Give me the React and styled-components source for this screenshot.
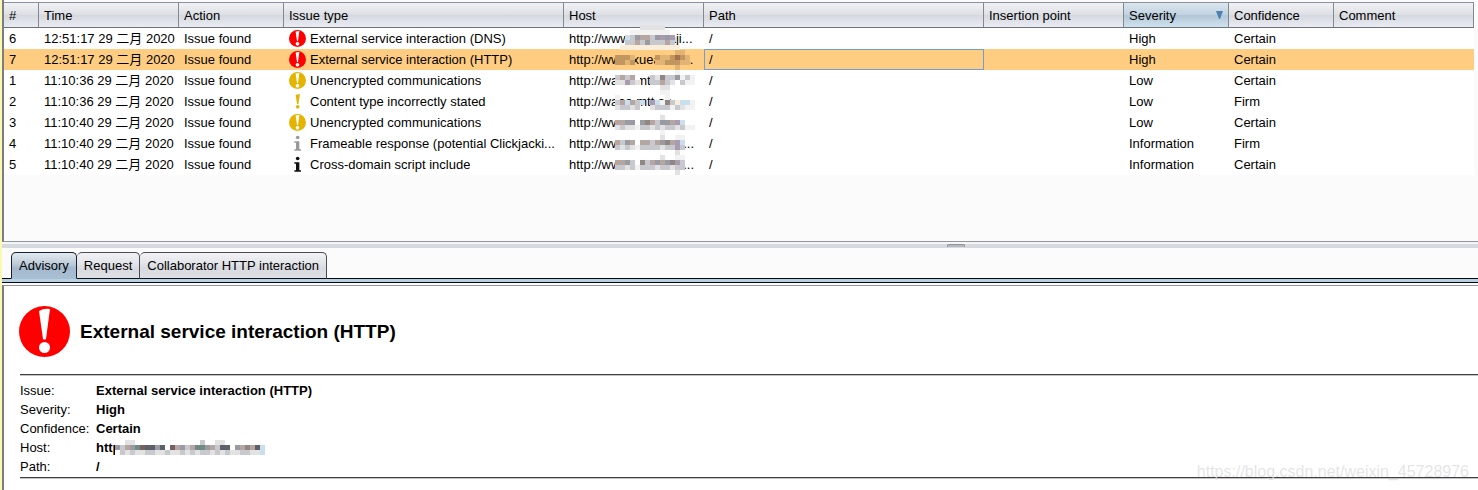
import React, { useState } from "react";
import styled, { createGlobalStyle } from "styled-components";

const GlobalStyle = createGlobalStyle`
  * { box-sizing: border-box; }
  body {
    margin: 0;
    background: #fbfbfb;
    color: #000;
    font: 13px/19px "Liberation Sans", "Noto Sans CJK SC", sans-serif;
  }
`;

const Window = styled.div`
  position: relative;
  display: flex;
  flex-direction: column;
  min-height: 100vh;
  overflow: hidden;
  border-left: 2px solid #fbf8b2;
`;

const ListPane = styled.section`
  flex: none;
  min-height: 242px;
  padding: 2px 4px 0 0;
  border-left: 2px solid #7b7e85;
  border-bottom: 1px solid #92959b;
`;

const IssueTable = styled.table`
  width: 100%;
  table-layout: fixed;
  border-collapse: separate;
  border-spacing: 0;
  background: #fff;
`;

const Col = styled.col`
  width: ${(p) => (p.$width ? `${p.$width}px` : "auto")};
`;

const HeadCell = styled.th`
  height: 26px;
  padding: 0 5px;
  text-align: left;
  font-weight: normal;
  border-top: 1px solid #8b919c;
  border-right: 1px solid #84888f;
  border-bottom: 1px solid #6d7279;
  background: ${(p) =>
    p.$sorted
      ? "linear-gradient(#dbe6ee, #c0d2e0 50%, #b1c6d6 51%, #cfe2ef)"
      : "linear-gradient(#f1f2f5, #dcdfe4 50%, #d5d8de 51%, #e9ecf2)"};
`;

const HeadContent = styled.div`
  display: flex;
  justify-content: space-between;
  align-items: center;
`;

const SortArrow = styled.svg`
  width: 7px;
  height: 8px;
`;

const IssueRow = styled.tr`
  background: ${(p) => (p.$selected ? "#ffcd82" : "#fff")};
`;

const Cell = styled.td`
  height: 21px;
  padding: 0 0 0 5px;
  line-height: 19px;
  white-space: nowrap;
  overflow: hidden;
  text-overflow: ellipsis;
  outline: ${(p) => (p.$focused ? "1px solid #6f9fce" : "none")};
  outline-offset: -1px;
`;

const HostCell = styled(Cell)`
  position: ${(p) => (p.$anchor ? "relative" : "static")};
  overflow: visible;
`;

const IssueName = styled.div`
  display: flex;
  align-items: center;
  gap: 4px;
  span {
    overflow: hidden;
    text-overflow: ellipsis;
  }
`;

const IconBox = styled.svg`
  flex: none;
  width: ${(p) => p.$size}px;
  height: ${(p) => p.$size}px;
`;

const Mosaic = styled.svg`
  position: absolute;
  z-index: 1;
  top: ${(p) => p.$top}px;
  left: ${(p) => p.$left}px;
  pointer-events: none;
`;

const Splitter = styled.div`
  flex: none;
  height: 8px;
  padding-left: 64%;
  border-top: 2px solid #f4f5f7;
  border-bottom: 2px solid #fbfbfb;
  background: #d6d9df;
`;

const Grip = styled.div`
  width: 18px;
  height: 3px;
  border: 1px solid #8f949c;
  border-bottom: 0;
  border-radius: 2px 2px 0 0;
  background: #b4b8bf;
`;

const TabBar = styled.div`
  display: flex;
  padding: 2px 0 0 9px;
  border-bottom: 1px solid #05080f;
`;

const Tab = styled.button`
  height: 27px;
  margin: 0 0 -1px;
  padding: 0 7px 1px;
  font: inherit;
  color: #000;
  border: 1px solid ${(p) => (p.$active ? "#16202e" : "#4a4d54")};
  border-left-width: ${(p) => (p.$first ? "1px" : "0")};
  border-bottom-color: ${(p) => (p.$active ? "#a9bfd3" : "#0c1018")};
  border-radius: 5px 5px 0 0;
  background: ${(p) =>
    p.$active
      ? "linear-gradient(#e3eaf0, #bccbd9 45%, #a3b8cc 60%, #a9bfd3)"
      : "linear-gradient(#f3f3f6, #e1e3e8 45%, #d8dae0 60%, #dee0e5)"};
`;

const TabStrip = styled.div`
  height: 4px;
  background: #b9d0e1;
  border-bottom: 1px solid #05080f;
`;

const Advisory = styled.section`
  flex: 1;
  margin-top: 2px;
  padding: 20px 0 0 16px;
  border-top: 1px solid #92959b;
  border-left: 2px solid #7b7e85;
  background: #fff;
`;

const TitleRow = styled.header`
  display: flex;
  align-items: center;
  gap: 10px;
  margin-left: -1px;
`;

const Title = styled.h1`
  margin: 0;
  font-size: 19px;
  line-height: 24px;
  font-weight: bold;
`;

const Rule = styled.hr`
  height: 2px;
  margin: ${(p) => p.$top}px 0 0;
  border: 0;
  border-top: 1px solid #404040;
  background: #c6c3c6;
`;

const Facts = styled.table`
  margin-top: 5px;
  border-spacing: 0;
  th, td {
    height: 19px;
    padding: 0;
    text-align: left;
    white-space: nowrap;
  }
  th {
    width: 76px;
    font-weight: normal;
  }
  td {
    position: relative;
    font-weight: bold;
  }
`;

const Watermark = styled.div`
  position: absolute;
  right: 9px;
  bottom: 8px;
  font-size: 16px;
  line-height: 20px;
  color: rgba(220, 220, 220, 0.75);
`;

const COLORS = { red: "#ff0000", yellow: "#e5b400", grey: "#999999", black: "#111111" };

function IssueIcon({ kind, color, size = 17 }) {
  const fill = COLORS[color];
  return (
    <IconBox $size={size} viewBox="0 0 51 51" aria-hidden="true">
      {kind === "disc" && (
        <>
          <circle cx="25.500" cy="25.500" r="25.500" fill={fill} />
          <path d="M20 5 Q25 2 31 3 L27 33 Q25 34 24 33 Z" fill="#fff" />
          <circle cx="25.500" cy="41.500" r="5.500" fill="#fff" />
        </>
      )}
      {kind === "bang" && (
        <>
          <path d="M20 6 Q26 3 33 4 L28 33 H24 Z" fill={fill} />
          <circle cx="26" cy="41.500" r="5.500" fill={fill} />
        </>
      )}
      {kind === "info" && (
        <>
          <circle cx="26" cy="7.500" r="5.500" fill={fill} />
          <path d="M16 19 H31 V43 H36 V47 H16 V43 H21 V23 H16 Z" fill={fill} />
        </>
      )}
    </IconBox>
  );
}

const SHADES = {
  a: "#9a9ba2", b: "#b5a6a1", c: "#c7c9cf", d: "#e2e2e2", e: "#a99bb0", f: "#8e8783",
  g: "#c9dfee", h: "#faedda", o: "#c2975f", p: "#e3b374", q: "#a8704c", s: "#f2f2f2", w: "#ffffff",
  k: "#5d6069", t: "#6f8a83", m: "#78605e",
};

function Blocks({ rows, top, left }) {
  return (
    <Mosaic $top={top} $left={left} width={rows[0].length * 5} height={rows.length * 5} shapeRendering="crispEdges" aria-hidden="true">
      {rows.flatMap((row, y) =>
        [...row].map((ch, x) =>
          SHADES[ch] ? <rect key={`${x}-${y}`} x={x * 5} y={y * 5} width="5" height="5" fill={SHADES[ch]} /> : null
        )
      )}
    </Mosaic>
  );
}

const HOST_BLOCKS = [
  "......ddddd......",
  "....ssssssss.....",
  "...gcabbcaeae....",
  "...ccbcacccbc....",
  "..hhhhhhhhhhhh...",
  ".............pp..",
  ".ooop....oppoqop.",
  ".oopo....ppooopp.",
  ".............p...",
  ".............s...",
  ".cbcbw..cdfccascs",
  ".ddecd..ccbcdwcss",
  "..........dd.....",
  "..........ss.....",
  ".s.........s.....",
  ".cbgbcg.egsfchggs",
  ".dccdc..dcccscdss",
  ".................",
  "..........d......",
  ".bbaawafbcaabegww",
  ".dcddsccdcdccdcss",
  "..........s......",
  "..........d..ss..",
  ".bcabwbbcbafbeg..",
  ".cdcdsccccdccec..",
  ".............d...",
  "..........d..ss..",
  ".bbacwfcbabafec..",
  ".ccdcscccdccdcc..",
  ".............d...",
];

const DETAIL_BLOCKS = [
  "..dd.............c..dd........",
  "acbatmkkakwmbacbttabckkwabfbkg",
  "wcdcddccddcddcdcdccdcdcddccddg",
];

const HEADERS = [
  { label: "#", width: 35 },
  { label: "Time", width: 140 },
  { label: "Action", width: 105 },
  { label: "Issue type", width: 280 },
  { label: "Host", width: 140 },
  { label: "Path" },
  { label: "Insertion point", width: 140 },
  { label: "Severity", width: 105, sorted: true },
  { label: "Confidence", width: 105 },
  { label: "Comment", width: 140 },
];

const ISSUES = [
  { id: 6, time: "12:51:17 29 二月 2020", kind: "disc", color: "red", name: "External service interaction (DNS)", host: "http://www.aaaaaaji...", severity: "High", confidence: "Certain" },
  { id: 7, time: "12:51:17 29 二月 2020", kind: "disc", color: "red", name: "External service interaction (HTTP)", host: "http://www.xueaaaa...", severity: "High", confidence: "Certain" },
  { id: 1, time: "11:10:36 29 二月 2020", kind: "disc", color: "yellow", name: "Unencrypted communications", host: "http://waaa.mtt.aa", severity: "Low", confidence: "Certain" },
  { id: 2, time: "11:10:36 29 二月 2020", kind: "bang", color: "yellow", name: "Content type incorrectly stated", host: "http://waaa.mtt.aa", severity: "Low", confidence: "Firm" },
  { id: 3, time: "11:10:40 29 二月 2020", kind: "disc", color: "yellow", name: "Unencrypted communications", host: "http://www.aaaaaaa", severity: "Low", confidence: "Certain" },
  { id: 4, time: "11:10:40 29 二月 2020", kind: "info", color: "grey", name: "Frameable response (potential Clickjacki...", host: "http://www.aaaaaaa...", severity: "Information", confidence: "Firm" },
  { id: 5, time: "11:10:40 29 二月 2020", kind: "info", color: "black", name: "Cross-domain script include", host: "http://www.aaaaaaa...", severity: "Information", confidence: "Certain" },
];

const TABS = ["Advisory", "Request", "Collaborator HTTP interaction"];

const FACTS = [
  ["Issue:", "External service interaction (HTTP)"],
  ["Severity:", "High"],
  ["Confidence:", "Certain"],
  ["Host:", "http"],
  ["Path:", "/"],
];

export default function App() {
  const [selected, setSelected] = useState(7);
  const [tab, setTab] = useState("Advisory");
  return (
    <Window>
      <GlobalStyle />
      <ListPane>
        <IssueTable>
          <colgroup>
            {HEADERS.map((h) => <Col key={h.label} $width={h.width} />)}
          </colgroup>
          <thead>
            <tr>
              {HEADERS.map((h) => (
                <HeadCell key={h.label} $sorted={h.sorted} scope="col">
                  <HeadContent>
                    {h.label}
                    {h.sorted && (
                      <SortArrow viewBox="0 0 7 8" aria-hidden="true">
                        <path d="M0 0 H7 L4 8 H3 Z" fill="#4f81b0" />
                      </SortArrow>
                    )}
                  </HeadContent>
                </HeadCell>
              ))}
            </tr>
          </thead>
          <tbody>
            {ISSUES.map((issue, index) => (
              <IssueRow key={issue.id} $selected={issue.id === selected} onClick={() => setSelected(issue.id)}>
                <Cell>{issue.id}</Cell>
                <Cell>{issue.time}</Cell>
                <Cell>Issue found</Cell>
                <Cell>
                  <IssueName>
                    <IssueIcon kind={issue.kind} color={issue.color} />
                    <span>{issue.name}</span>
                  </IssueName>
                </Cell>
                <HostCell $anchor={index === 0}>
                  {issue.host}
                  {index === 0 && <Blocks rows={HOST_BLOCKS} top={-3} left={46} />}
                </HostCell>
                <Cell $focused={issue.id === selected}>/</Cell>
                <Cell />
                <Cell>{issue.severity}</Cell>
                <Cell>{issue.confidence}</Cell>
                <Cell />
              </IssueRow>
            ))}
          </tbody>
        </IssueTable>
      </ListPane>
      <Splitter><Grip /></Splitter>
      <TabBar role="tablist">
        {TABS.map((name, i) => (
          <Tab key={name} type="button" role="tab" aria-selected={tab === name} $active={tab === name} $first={i === 0} onClick={() => setTab(name)}>
            {name}
          </Tab>
        ))}
      </TabBar>
      <TabStrip />
      <Advisory>
        <TitleRow>
          <IssueIcon kind="disc" color="red" size={51} />
          <Title>External service interaction (HTTP)</Title>
        </TitleRow>
        <Rule $top={17} />
        <Facts>
          <tbody>
            {FACTS.map(([label, value]) => (
              <tr key={label}>
                <th scope="row">{label}</th>
                <td>
                  {value}
                  {label === "Host:" && <Blocks rows={DETAIL_BLOCKS} top={2} left={19} />}
                </td>
              </tr>
            ))}
          </tbody>
        </Facts>
        <Rule $top={1} />
      </Advisory>
      <Watermark>https://blog.csdn.net/weixin_45728976</Watermark>
    </Window>
  );
}
